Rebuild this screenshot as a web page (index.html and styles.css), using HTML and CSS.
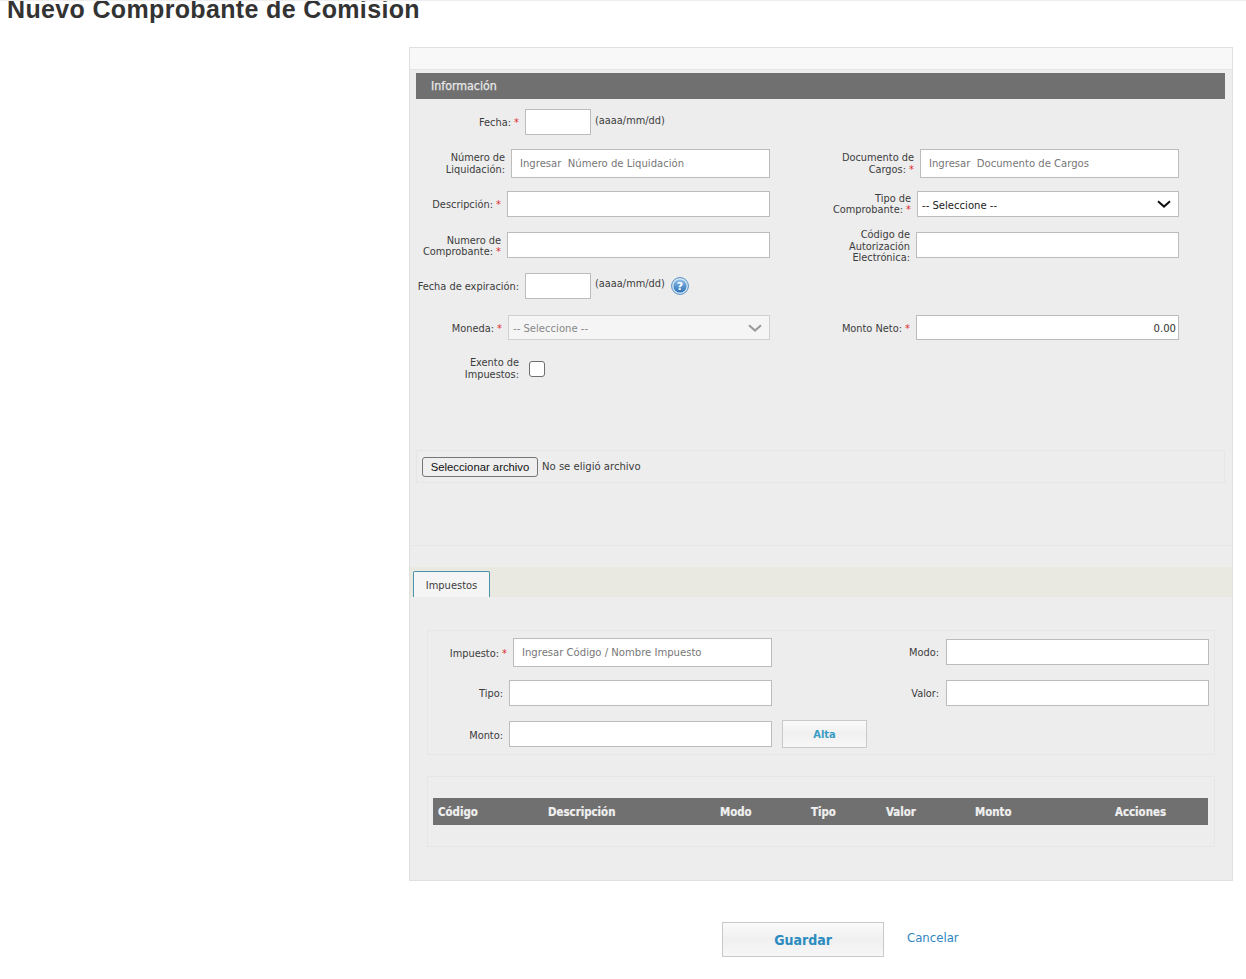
FILE: index.html
```html
<!DOCTYPE html>
<html lang="es">
<head>
<meta charset="utf-8">
<title>Nuevo Comprobante de Comision</title>
<link rel="stylesheet" href="styles.css">
</head>
<body>
<h1 class="title">Nuevo Comprobante de Comision</h1>
<main class="content">
  <section class="panel">
    <div class="panel-head"></div>
    <h2 class="bar">Información</h2>
    <div class="form-grid">
      <div class="field f-date"><label class="lbl">Fecha: <b>*</b></label><input class="inp date h26"><span class="hint">(aaaa/mm/dd)</span></div>
      <div></div>

      <div class="field f-liq"><label class="lbl">Número de<br>Liquidación:</label><input class="inp grow h29 pad" placeholder="Ingresar  Número de Liquidación"></div>
      <div class="field f-doc"><label class="lbl">Documento de<br>Cargos: <b>*</b></label><input class="inp grow h29 pad" placeholder="Ingresar  Documento de Cargos"></div>

      <div class="field f-desc"><label class="lbl">Descripción: <b>*</b></label><input class="inp grow h26"></div>
      <div class="field f-tipo"><label class="lbl">Tipo de<br>Comprobante: <b>*</b></label>
        <div class="select-wrap"><select class="inp sel h26"><option>-- Seleccione --</option></select>
          <svg class="chev" width="14" height="8" viewBox="0 0 14 8"><path d="M1 1.2 7 6.6 13 1.2" fill="none" stroke="#111" stroke-width="2"/></svg></div></div>

      <div class="field f-desc"><label class="lbl">Numero de<br>Comprobante: <b>*</b></label><input class="inp grow h26"></div>
      <div class="field f-cod f-cod3"><label class="lbl">Código de<br>Autorización<br>Electrónica:</label><input class="inp grow h26"></div>

      <div class="field f-date"><label class="lbl">Fecha de expiración:</label><input class="inp date h26"><span class="hint">(aaaa/mm/dd)</span>
        <svg class="help" width="18" height="18" viewBox="0 0 18 18"><defs><linearGradient id="hg" x1="0" y1="0" x2="0" y2="1"><stop offset="0" stop-color="#8fc0e8"/><stop offset="1" stop-color="#2a6fb5"/></linearGradient></defs><circle cx="9" cy="9" r="8.4" fill="#dce9f5" stroke="#4d8cc4"/><circle cx="9" cy="9" r="6.6" fill="url(#hg)"/><text x="9" y="12.6" text-anchor="middle" class="help-q">?</text></svg></div>
      <div></div>

      <div class="field f-mon"><label class="lbl">Moneda: <b>*</b></label>
        <div class="select-wrap"><select class="inp sel h25 off" disabled><option>-- Seleccione --</option></select>
          <svg class="chev" width="14" height="8" viewBox="0 0 14 8"><path d="M1 1.2 7 6.6 13 1.2" fill="none" stroke="#999" stroke-width="2"/></svg></div></div>
      <div class="field f-cod"><label class="lbl">Monto Neto: <b>*</b></label><input class="inp grow h25 num" value="0.00"></div>

      <div class="field f-exe"><label class="lbl">Exento de<br>Impuestos:</label><span class="check"></span></div>
      <div></div>
    </div>

    <div class="file-box"><button class="file-btn" type="button">Seleccionar archivo</button><span class="file-name">No se eligió archivo</span></div>
    <hr class="divider">
    <div class="tabs"><span class="tab">Impuestos</span></div>

    <div class="box tax-box">
      <div class="tax-grid">
        <div class="field f-imp"><label class="lbl">Impuesto: <b>*</b></label><input class="inp grow h29 pad" placeholder="Ingresar Código / Nombre Impuesto"></div>
        <div class="field f-mod f-first"><label class="lbl">Modo:</label><input class="inp grow h26"></div>
        <div class="field f-tax"><label class="lbl">Tipo:</label><input class="inp grow h26"></div>
        <div class="field f-mod"><label class="lbl">Valor:</label><input class="inp grow h26"></div>
        <div class="field f-monto"><label class="lbl">Monto:</label><input class="inp monto h26"><button class="btn alta" type="button">Alta</button></div>
      </div>
    </div>

    <div class="box table-box">
      <table class="tbl">
        <thead><tr><th class="c1">Código</th><th class="c2">Descripción</th><th class="c3">Modo</th><th class="c4">Tipo</th><th class="c5">Valor</th><th class="c6">Monto</th><th>Acciones</th></tr></thead>
      </table>
    </div>
  </section>
  <div class="actions"><button class="btn save" type="button">Guardar</button><a class="cancel" href="#">Cancelar</a></div>
</main>
</body>
</html>
```
FILE: styles.css
```css
* { box-sizing: border-box; }
html, body { margin: 0; padding: 0; background: #fff; }
body { font-family: "DejaVu Sans Condensed", "DejaVu Sans", sans-serif; font-size: 10.9px; color: #3c3c3c; border-top: 1px solid #eee; height: 979px; overflow: hidden; }

.title { margin: 0; padding-left: 7px; font: bold 25px/17px "Liberation Sans", Arial, sans-serif; color: #333; letter-spacing: .35px; height: 46px; }

.content { padding: 0 13px 0 409px; }
.panel { background: #ededed; border: 1px solid #e0e0e0; height: 834px; padding-bottom: 33px; }
.panel-head { height: 22px; background: #f8f8f8; border-bottom: 1px solid #e6e6e6; }
.bar { margin: 3px 7px 0 6px; height: 26px; background: #707070; color: #e8e8e8; font-size: 12.3px; font-weight: normal; line-height: 26px; padding-left: 15px; -webkit-text-stroke: .25px #e8e8e8; }

.form-grid { margin: 10px 0 0 6px; display: grid; grid-template-columns: 404px 359px; grid-template-rows: 40px 42px 41px 41px 42px 46px 89px; }
.field { display: flex; align-items: flex-start; height: max-content; }
.lbl { flex: none; text-align: right; line-height: 11.5px; padding: 2px 6px 0 0; align-self: center; color: #3c3c3c; white-space: nowrap; }
.lbl b { color: #e0272b; font-weight: normal; }

.f-date .lbl { width: 109px; }
.f-liq .lbl { width: 95px; padding-top: 0; }
.f-desc .lbl { width: 91px; }
.f-mon .lbl { width: 92px; }
.f-exe .lbl { width: 109px; padding-top: 0; align-self: flex-start; margin-top: -1px; }
.f-doc .lbl { width: 100px; padding-top: 0; }
.f-tipo .lbl { width: 97px; padding-top: 0; }
.f-cod .lbl { width: 96px; }
.f-cod3 .lbl { margin-top: -5px; }

.f-liq, .f-desc, .f-mon { width: 354px; }
.f-doc, .f-tipo, .f-cod { width: 359px; }

.inp { display: block; border: 1px solid #bcbcbc; background: #fff; font: inherit; font-size: 11.2px; color: #444; padding: 0 5px; margin: 0; border-radius: 0; outline: none; }
.inp::placeholder { color: #777; opacity: 1; white-space: pre; }
.grow { flex: 1 1 0; min-width: 0; }
.date { width: 66px; flex: none; }
.monto { width: 263px; flex: none; }
.h25 { height: 25px; }
.h26 { height: 26px; }
.h29 { height: 29px; }
.pad { padding-left: 8px; }
.num { text-align: right; padding: 2px 2px 0 5px; color: #333; }
.hint { margin: 4px 0 0 4px; line-height: 14px; }
.f-date:first-child .hint { margin-top: 5px; }
.help { margin: 4px 0 0 6px; flex: none; }
.help-q { font: bold 11px "DejaVu Sans", sans-serif; fill: #fff; }

.select-wrap { position: relative; flex: 1 1 0; min-width: 0; }
.sel { width: 100%; appearance: none; -webkit-appearance: none; padding: 2px 0 0 4px; color: #222; }
.sel.off { background: #f5f5f5; color: #888; opacity: 1; border-color: #d0d0d0; }
.chev { position: absolute; right: 8px; top: 9px; pointer-events: none; }

.f-exe { margin-top: -3px; }
.check { display: block; width: 16px; height: 16px; margin: 3px 0 0 4px; border: 1px solid #6e6e6e; border-radius: 3px; background: #fff; }

.file-box { margin: 0 7px 0 6px; height: 33px; border: 1px solid #e6e6e6; padding: 6px 5px; display: flex; align-items: center; }
.file-btn { font: 11.3px "Liberation Sans", Arial, sans-serif; height: 20px; width: 116px; padding: 0; background: #efefef; border: 1px solid #767676; border-radius: 3px; color: #111; }
.file-name { margin-left: 4px; font-size: 11.2px; }

.divider { margin: 62px 0 0; border: 0; border-top: 1px solid #e6e6e6; }
.tabs { margin-top: 21px; height: 30px; background: #e9e9e1; padding: 4px 0 0 3px; }
.tab { display: block; width: 77px; height: 26px; background: #f5f5f5; border: 1px solid #4b93a8; border-bottom: 0; text-align: center; line-height: 27px; font-size: 11px; border-radius: 2px 2px 0 0; }

.box { margin: 0 17px; border: 1px solid #e6e6e6; }
.tax-box { margin-top: 33px; height: 125px; padding: 7px 5px 0 0; }
.tax-grid { display: grid; grid-template-columns: 518px 263px; grid-template-rows: 42px 41px 30px; }
.f-imp .lbl { width: 85px; }
.f-tax .lbl, .f-monto .lbl { width: 81px; }
.f-imp, .f-tax { width: 344px; }
.f-mod { position: relative; }
.f-first { margin-top: 1px; }
.f-mod .lbl { position: absolute; right: 100%; top: 6px; padding-right: 7px; }
.f-monto { grid-column: 1; }
.btn { font-family: inherit; cursor: pointer; background: linear-gradient(#fafafa, #f0f0f0 50%, #f7f7f7); border: 1px solid #c9c9c9; color: #2b8bbf; font-weight: bold; padding: 0; }
.alta { width: 85px; height: 28px; font-size: 11px; margin: -1px 0 0 10px; padding-top: 1px; flex: none; color: #3a9cc5; }

.table-box { margin-top: 21px; height: 71px; padding: 21px 6px 0 5px; }
.tbl { width: 775px; height: 27px; border-collapse: collapse; table-layout: fixed; background: #707070; }
.tbl th { text-align: left; padding: 0 0 0 5px; color: #f0f0f0; font-size: 11.4px; font-weight: bold; height: 27px; -webkit-text-stroke: .2px #f0f0f0; }
.c1 { width: 110px; }
.c2 { width: 172px; }
.c3 { width: 91px; }
.c4 { width: 75px; }
.c5 { width: 89px; }
.c6 { width: 140px; }

.actions { margin-top: 41px; padding-left: 313px; display: flex; align-items: flex-start; }
.save { width: 162px; height: 35px; font-size: 14px; }
.cancel { margin: 6px 0 0 23px; font-size: 13px; color: #2f85c0; text-decoration: none; line-height: 20px; }
```
